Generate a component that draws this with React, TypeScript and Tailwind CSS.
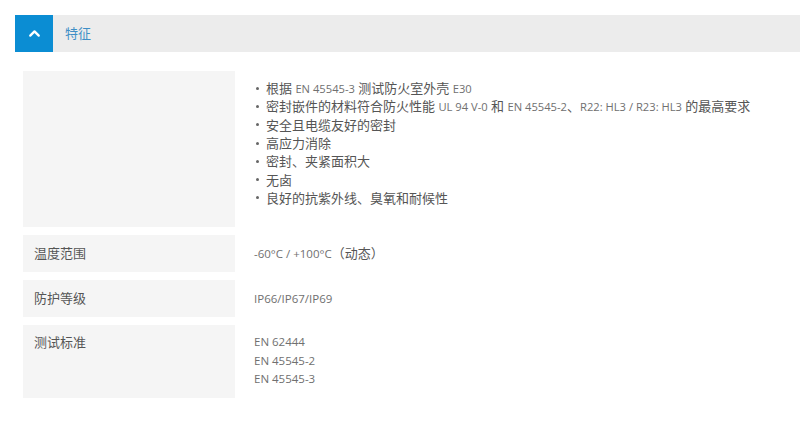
import { ChevronUp } from 'lucide-react'

const latin = 'text-[11.5px] text-[#707070]'
const latinList = 'text-[11.2px] text-[#707070]'

const features: (string | [string, boolean])[][] = [
  [['根据 ', false], ['EN 45545-3', true], [' 测试防火室外壳 ', false], ['E30', true]],
  [
    ['密封嵌件的材料符合防火性能 ', false],
    ['UL 94 V-0', true],
    [' 和 ', false],
    ['EN 45545-2', true],
    ['、', false],
    ['R22: HL3 / R23: HL3', true],
    [' 的最高要求', false],
  ],
  [['安全且电缆友好的密封', false]],
  [['高应力消除', false]],
  [['密封、夹紧面积大', false]],
  [['无卤', false]],
  [['良好的抗紫外线、臭氧和耐候性', false]],
]

const Row = ({
  label,
  className,
  children,
}: {
  label?: string
  className: string
  children: React.ReactNode
}) => (
  <div className="flex">
    <div
      className={`w-[212px] shrink-0 bg-[#f5f5f5] pl-[11px] text-[13px] leading-[18px] text-[#555] ${className}`}
    >
      {label}
    </div>
    <div className={`flex-1 pl-[19px] text-[13px] leading-[18px] text-[#555] ${className}`}>
      {children}
    </div>
  </div>
)

const App = () => {
  return (
    <div
      className="w-[800px] h-[423px] bg-white pt-[15px]"
      style={{ fontFamily: '"Open Sans", "Noto Sans CJK SC", sans-serif' }}
    >
      <div className="ml-[15px] flex h-[37px] items-center bg-[#ececec]">
        <div className="flex h-[37px] w-[38px] items-center justify-center bg-[#0b8dd3]">
          <ChevronUp size={17} strokeWidth={3.2} color="#ffffff" />
        </div>
        <span className="ml-[12px] text-[13px] text-[#3f8fc6]">特征</span>
      </div>

      <div className="ml-[23px] mt-[19px] flex flex-col gap-[8px]">
        <Row className="h-[156px] pt-[8px]">
          <ul className="flex flex-col">
            {features.map((line, i) => (
              <li key={i} className="flex h-[18.3px] items-center">
                <span className="mr-[7px] ml-[2px] h-[3px] w-[3px] rounded-full bg-[#666]" />
                <span>
                  {line.map(([t, isLatin], j) => (
                    <span key={j} className={isLatin ? latinList : ''}>
                      {t}
                    </span>
                  ))}
                </span>
              </li>
            ))}
          </ul>
        </Row>

        <Row label="温度范围" className="h-[37px] pt-[9px]">
          <span className={latin}>-60°C / +100°C</span>（动态）
        </Row>

        <Row label="防护等级" className="h-[37px] pt-[9px]">
          <span className={latin}>IP66/IP67/IP69</span>
        </Row>

        <Row label="测试标准" className="h-[73px] pt-[8px]">
          <div className={`${latin} flex flex-col leading-[18.5px]`}>
            <span>EN 62444</span>
            <span>EN 45545-2</span>
            <span>EN 45545-3</span>
          </div>
        </Row>
      </div>
    </div>
  )
}

export default App
